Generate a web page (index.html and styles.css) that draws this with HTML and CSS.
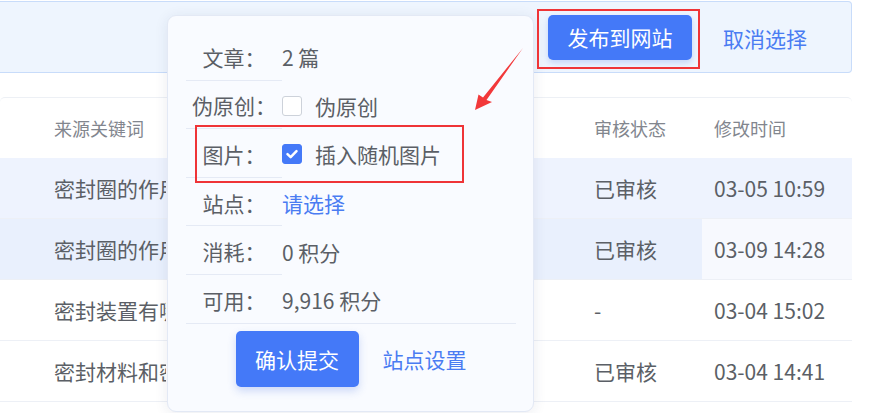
FILE: index.html
```html
<!DOCTYPE html>
<html lang="zh-CN">
<head>
<meta charset="utf-8">
<title>发布到网站</title>
<link rel="stylesheet" href="styles.css">
</head>
<body>
<div class="page">
  <div class="toolbar">
    <button class="btn btn-publish">发布到网站</button>
    <a class="link link-cancel">取消选择</a>
  </div>

  <div class="table">
    <div class="row row-head">
      <div class="cell c1">来源关键词</div>
      <div class="cell c2">审核状态</div>
      <div class="cell c3">修改时间</div>
    </div>
    <div class="row row-sel">
      <div class="cell c1"><span class="clip">密封圈的作用</span></div>
      <div class="cell c2">已审核</div>
      <div class="cell c3">03-05 10:59</div>
    </div>
    <div class="row row-hover">
      <div class="cell c1"><span class="clip">密封圈的作用</span></div>
      <div class="cell c2">已审核</div>
      <div class="cell c3 cell-light">03-09 14:28</div>
    </div>
    <div class="row">
      <div class="cell c1"><span class="clip">密封装置有哪</span></div>
      <div class="cell c2">-</div>
      <div class="cell c3">03-04 15:02</div>
    </div>
    <div class="row">
      <div class="cell c1"><span class="clip">密封材料和密</span></div>
      <div class="cell c2">已审核</div>
      <div class="cell c3">03-04 14:41</div>
    </div>
  </div>

  <div class="popover">
    <div class="form-row">
      <div class="form-label">文章：</div>
      <div class="form-value">2 篇</div>
    </div>
    <div class="form-row">
      <div class="form-label">伪原创：</div>
      <div class="form-value"><span class="checkbox"></span>伪原创</div>
    </div>
    <div class="form-row">
      <div class="form-label">图片：</div>
      <div class="form-value"><span class="checkbox checked"><svg viewBox="0 0 20 20" width="20" height="20"><polyline points="5,10.2 8.5,13.5 15,6.8" fill="none" stroke="#fff" stroke-width="2.8" stroke-linecap="round" stroke-linejoin="round"/></svg></span>插入随机图片</div>
    </div>
    <div class="form-row">
      <div class="form-label">站点：</div>
      <div class="form-value"><a class="link">请选择</a></div>
    </div>
    <div class="form-row">
      <div class="form-label">消耗：</div>
      <div class="form-value">0 积分</div>
    </div>
    <div class="form-row form-row-last">
      <div class="form-label">可用：</div>
      <div class="form-value">9,916 积分</div>
    </div>
    <div class="form-footer">
      <button class="btn btn-confirm">确认提交</button>
      <a class="link">站点设置</a>
    </div>
  </div>

  <div class="mark mark-publish"></div>
  <div class="mark mark-image"></div>
  <svg class="arrow" viewBox="0 0 60 70" width="60" height="70">
    <polygon points="55,4 18.5,56 24,58 7,66 10.5,50.5 15,53.5" fill="#f2383a"/>
  </svg>
</div>
</body>
</html>
```

FILE: styles.css
```css
html, body {
  margin: 0;
  padding: 0;
  background: #ffffff;
}

body {
  font-family: "Noto Sans CJK SC", "Noto Sans", sans-serif;
  color: #5b5f66;
}

.page {
  position: relative;
  width: 884px;
  height: 413px;
  overflow: hidden;
}

/* ---------- toolbar ---------- */
.toolbar {
  box-sizing: border-box;
  margin-top: 1px;
  width: 852px;
  height: 72px;
  background: #eef5fe;
  border: 1px solid #c8dcfa;
  border-left: none;
  border-radius: 0 4px 4px 0;
  display: flex;
  align-items: center;
  justify-content: flex-end;
  gap: 31px;
  padding-right: 44px;
}

.btn {
  font-family: inherit;
  font-size: 21px;
  border: none;
  color: #ffffff;
  background: #4479f8;
  border-radius: 5px;
  padding: 0;
  cursor: pointer;
}

.btn-publish {
  width: 144px;
  height: 45px;
  box-shadow: 0 3px 6px rgba(50, 95, 220, 0.22);
}

.link {
  color: #4a7cf2;
  font-size: 21px;
  text-decoration: none;
  cursor: pointer;
}

.link-cancel {
  line-height: 1;
  padding-top: 3px;
}

/* ---------- table ---------- */
.table {
  margin-top: 24px;
  width: 852px;
  border-top: 1px solid #edf0f5;
  border-radius: 5px 5px 0 0;
}

.row {
  display: grid;
  grid-template-columns: 574px 128px 150px;
  height: 61px;
  box-sizing: border-box;
  border-bottom: 1px solid #edf0f6;
  font-size: 21px;
  color: #5b5f66;
}

.row-head {
  height: 60px;
  border-bottom: none;
  font-size: 18px;
  color: #82868e;
}

.cell {
  display: flex;
  align-items: center;
  white-space: nowrap;
  overflow: hidden;
}

.clip {
  display: block;
  width: 112px;
  overflow: hidden;
  white-space: nowrap;
}

.c1 { padding-left: 54px; }
.c2 { padding-left: 20px; }
.c3 { padding-left: 12px; }

.row-sel { background: #eef3fe; }
.row-hover { background: #e9f0fd; }
.cell-light { background: #f7f9fe; }

/* ---------- popover ---------- */
.popover {
  position: absolute;
  left: 167px;
  top: 15px;
  width: 367px;
  height: 397px;
  box-sizing: border-box;
  background: #f9fbff;
  border: 1px solid #e3e9f5;
  border-radius: 9px;
  padding: 16px 17px 0 18px;
  box-shadow: 0 2px 14px rgba(30, 45, 90, 0.09);
  font-size: 21px;
  color: #5b5f66;
}

.form-row {
  display: grid;
  grid-template-columns: 96px 1fr;
  height: 48.6px;
}

.form-row-last {
  height: 48px;
}

.form-label {
  display: flex;
  align-items: center;
  justify-content: center;
  padding-top: 2px;
  border-bottom: 1px solid #e5eaf5;
  white-space: nowrap;
}

.form-row-last .form-label {
  border-bottom: none;
}

.form-value {
  display: flex;
  align-items: center;
  padding-top: 2px;
  white-space: nowrap;
}

.checkbox {
  box-sizing: border-box;
  width: 20px;
  height: 20px;
  border: 1px solid #cdd2da;
  border-radius: 3px;
  background: #ffffff;
  margin-right: 13px;
  display: inline-flex;
  align-items: center;
  justify-content: center;
}

.checkbox.checked {
  background: #4479f8;
  border-color: #4479f8;
}

.checkbox svg {
  display: block;
}

.form-footer {
  border-top: 1px solid #e5eaf5;
  padding-top: 7px;
  display: flex;
  justify-content: center;
  align-items: center;
  gap: 24px;
}

.btn-confirm {
  width: 123px;
  height: 56px;
  box-shadow: 0 4px 9px rgba(50, 95, 220, 0.22);
}

/* ---------- annotations ---------- */
.mark {
  position: absolute;
  box-sizing: border-box;
  border: 2px solid #ef3437;
}

.mark-publish {
  left: 537px;
  top: 9px;
  width: 163px;
  height: 60px;
}

.mark-image {
  left: 195px;
  top: 125px;
  width: 269px;
  height: 58px;
}

.arrow {
  position: absolute;
  left: 468px;
  top: 44px;
  overflow: visible;
}
```
